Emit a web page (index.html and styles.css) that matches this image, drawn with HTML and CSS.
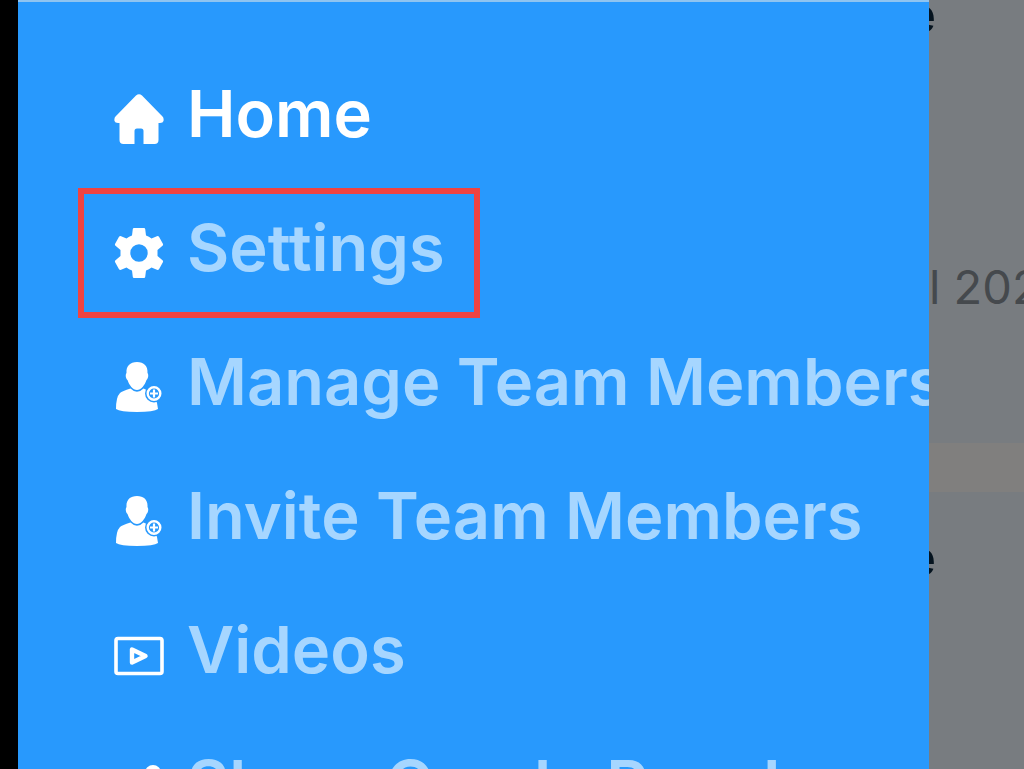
FILE: index.html
```html
<!DOCTYPE html>
<html lang="en">
<head>
    <meta charset="UTF-8">
    <meta name="viewport" content="width=device-width, initial-scale=1.0">
    <title>Menu</title>
    <link rel="stylesheet" href="styles.css">
</head>
<body>
    <div class="screen">
        <nav class="drawer">
            <ul class="menu">
                <li>
                    <a href="#" class="menu-item active">
                        <svg class="icon" viewBox="0 0 50 50" fill="currentColor"><path d="M22 1.500Q25-1 28 1.500L48.500 22.500Q50 24 49.500 27Q49 29 46 29H44.500V46Q44.500 50 40.500 50H29.500V37Q29.500 34.500 27 34.500H23Q20.500 34.500 20.500 37V50H9.500Q5.500 50 5.500 46V29H4Q1 29 .5 27Q0 24 1.500 22.500Z"/></svg>
                        <span>Home</span>
                    </a>
                </li>
                <li>
                    <a href="#" class="menu-item highlight">
                        <svg class="icon" viewBox="0 0 50 50" fill="currentColor" fill-rule="evenodd"><path d="M20 0H30Q31 0 31.200 1L32 7.500Q35 8.500 37.500 10.500L43.500 8Q44.500 8 45 8.800L49 16Q49.300 17 48.500 17.700L43.500 22V28L48.500 32.300Q49.300 33 49 34L45 41.200Q44.500 42 43.500 42L37.500 39.500Q35 41.500 32 42.500L31.200 49Q31 50 30 50H20Q19 50 18.800 49L18 42.500Q15 41.500 12.500 39.500L6.500 42Q5.500 42 5 41.200L1 34Q.7 33 1.500 32.300L6.500 28V22L1.500 17.700Q.7 17 1 16L5 8.800Q5.500 8 6.500 8L12.500 10.500Q15 8.500 18 7.500L18.800 1Q19 0 20 0ZM25 16.300A8.700 8.700 0 1 0 25 33.700A8.700 8.700 0 1 0 25 16.300Z"/></svg>
                        <span>Settings</span>
                    </a>
                </li>
                <li>
                    <a href="#" class="menu-item">
                        <svg class="icon" viewBox="0 0 50 50"><path fill="currentColor" d="M23 0C30 0 34 4 33.500 11C35 13 34 17 32.500 18C31 23 27 28 23 28C19 28 15 23 13.500 18C12 17 11 13 12.500 11C12 4 16 0 23 0ZM16.500 26.500Q23 33 29.500 26.500L39 31L43 41L44 47Q40 50 23 50Q6 50 2 47Q2 35 6 31Q8 29 16.500 26.500Z"/><circle cx="40" cy="31.500" r="9" fill="#2899fd"/><circle cx="40" cy="31.500" r="6.300" fill="none" stroke="currentColor" stroke-width="2.400"/><path d="M40 27.500V35.500M36 31.500H44" stroke="currentColor" stroke-width="2.200"/></svg>
                        <span>Manage Team Members</span>
                    </a>
                </li>
                <li>
                    <a href="#" class="menu-item">
                        <svg class="icon" viewBox="0 0 50 50"><path fill="currentColor" d="M23 0C30 0 34 4 33.500 11C35 13 34 17 32.500 18C31 23 27 28 23 28C19 28 15 23 13.500 18C12 17 11 13 12.500 11C12 4 16 0 23 0ZM16.500 26.500Q23 33 29.500 26.500L39 31L43 41L44 47Q40 50 23 50Q6 50 2 47Q2 35 6 31Q8 29 16.500 26.500Z"/><circle cx="40" cy="31.500" r="9" fill="#2899fd"/><circle cx="40" cy="31.500" r="6.300" fill="none" stroke="currentColor" stroke-width="2.400"/><path d="M40 27.500V35.500M36 31.500H44" stroke="currentColor" stroke-width="2.200"/></svg>
                        <span>Invite Team Members</span>
                    </a>
                </li>
                <li>
                    <a href="#" class="menu-item">
                        <svg class="icon" viewBox="0 0 50 50" fill="none" stroke="currentColor" stroke-linejoin="round"><rect x="2" y="8.500" width="46" height="35" rx="2" stroke-width="3.600"/><path d="M18 19.500V32.500L31.500 26Z" stroke-width="4.400"/></svg>
                        <span>Videos</span>
                    </a>
                </li>
                <li>
                    <a href="#" class="menu-item">
                        <svg class="icon" viewBox="0 0 50 50" fill="none" stroke="currentColor" stroke-width="4"><circle cx="39" cy="9" r="8" fill="currentColor" stroke="none"/><circle cx="11" cy="25" r="8" fill="currentColor" stroke="none"/><circle cx="39" cy="41" r="8" fill="currentColor" stroke="none"/><path d="M39 9L11 25L39 41"/></svg>
                        <span>Share Candy Panel</span>
                    </a>
                </li>
            </ul>
        </nav>
        <main class="page">
            <section class="card">
                <h2 class="card-title">e</h2>
                <p class="card-date">l 202</p>
            </section>
            <section class="card">
                <h2 class="card-title">e</h2>
            </section>
        </main>
    </div>
</body>
</html>
```
FILE: styles.css
```css
* {
    box-sizing: border-box;
}

body {
    margin: 0;
    background-color: #000000;
    font-family: 'Inter', 'Liberation Sans', sans-serif;
}

.screen {
    display: flex;
    height: 100vh;
    margin-left: 18px;
    overflow: hidden;
}

.drawer {
    flex: 1;
    min-width: 0;
    overflow: hidden;
    border-top: 2px solid #8fc4f0;
    background-color: #2899fd;
}

.menu {
    list-style: none;
    margin: 0;
    padding: 52px 0 0 60px;
}

.menu-item {
    display: flex;
    align-items: center;
    width: max-content;
    min-width: 402px;
    height: 130px;
    margin-bottom: 4px;
    padding: 0 20px 0 30px;
    border: 6px solid transparent;
    color: #a6d6ff;
    font-size: 65px;
    font-weight: 600;
    line-height: 80px;
    text-decoration: none;
    white-space: nowrap;
}

.menu-item span {
    padding-bottom: 10px;
}

.menu-item.active {
    color: #ffffff;
}

.menu-item.highlight {
    border-color: #f04342;
}

.icon {
    flex: none;
    width: 50px;
    height: 50px;
    margin-right: 23px;
    color: #ffffff;
}

.page {
    width: 95px;
    overflow: hidden;
    background-color: #807f7e;
}

.card {
    height: 494px;
    margin-bottom: 49px;
    padding-top: 36px;
    overflow: hidden;
    background-color: #787c80;
}

/* the list is scrolled a little, so the first card starts above the screen */
.card:first-child {
    margin-top: -51px;
}

.card-title {
    display: flex;
    justify-content: flex-end;
    width: 7px;
    margin: 0 0 212px;
    overflow: hidden;
    color: #06141f;
    font-size: 52px;
    font-weight: 600;
    line-height: 60px;
}

.card-date {
    margin: 0;
    color: #45494d;
    font-size: 47px;
    line-height: 60px;
    white-space: nowrap;
}
```
